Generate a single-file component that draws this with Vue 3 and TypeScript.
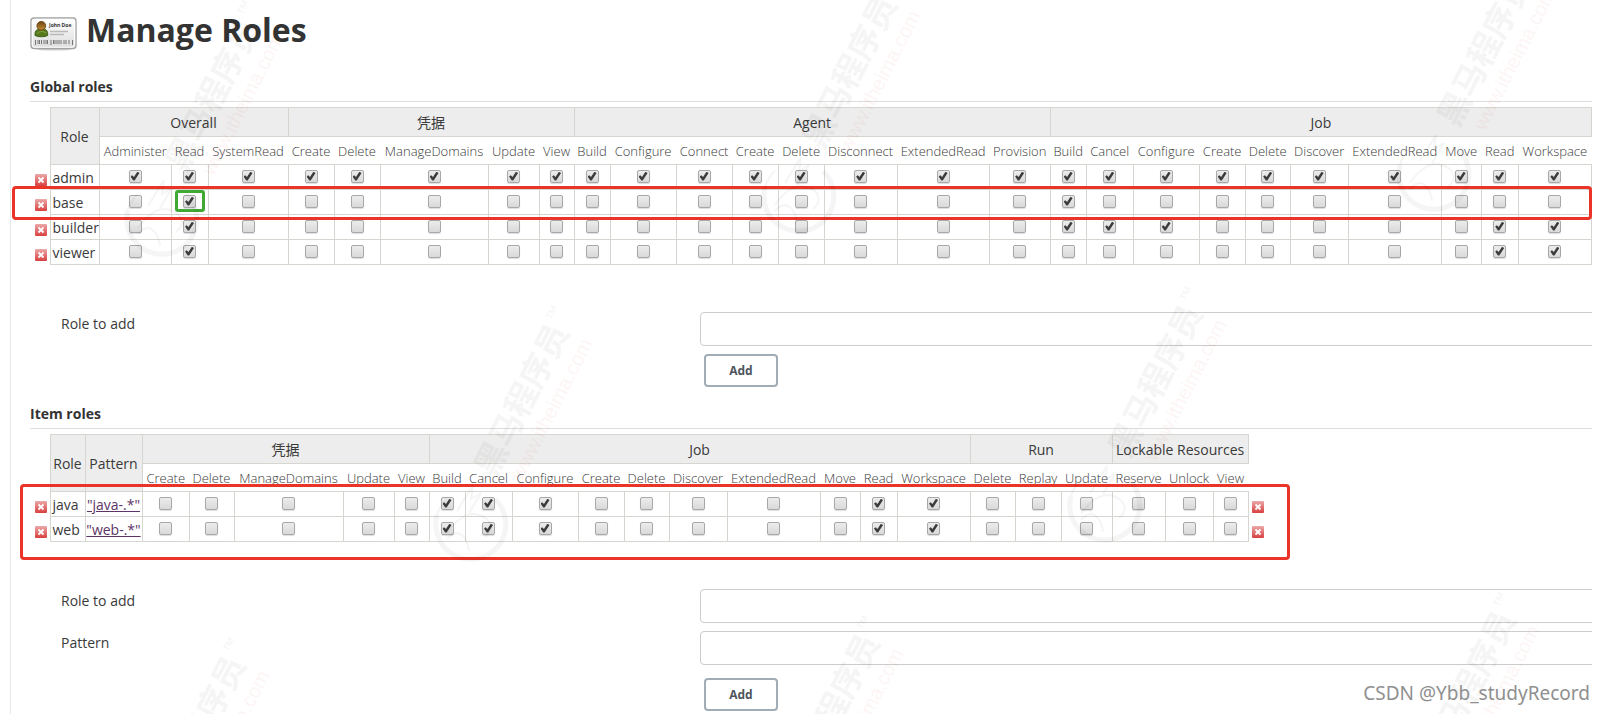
<script setup lang="ts">
import { reactive, ref } from 'vue'

interface Perm { name: string; width: number }
interface Group { title: string; perms: Perm[] }
interface Role { name: string; pattern?: string; granted: boolean[] }

const group = (title: string, perms: [string, number][]): Group => ({
  title,
  perms: perms.map(([name, width]) => ({ name, width })),
})

const jobPerms: [string, number][] = [
  ['Build', 36], ['Cancel', 47], ['Configure', 66], ['Create', 46], ['Delete', 45],
  ['Discover', 58], ['ExtendedRead', 93], ['Move', 40], ['Read', 37], ['Workspace', 73],
]

const globalGroups: Group[] = [
  group('Overall', [['Administer', 72], ['Read', 37], ['SystemRead', 80]]),
  group('凭据', [['Create', 46], ['Delete', 46], ['ManageDomains', 108], ['Update', 51], ['View', 35]]),
  group('Agent', [
    ['Build', 36], ['Configure', 66], ['Connect', 56], ['Create', 46], ['Delete', 46],
    ['Disconnect', 73], ['ExtendedRead', 92], ['Provision', 61],
  ]),
  group('Job', jobPerms),
]

const itemGroups: Group[] = [
  group('凭据', [['Create', 47], ['Delete', 45], ['ManageDomains', 109], ['Update', 51], ['View', 35]]),
  group('Job', jobPerms),
  group('Run', [['Delete', 45], ['Replay', 46], ['Update', 51]]),
  group('Lockable Resources', [['Reserve', 53], ['Unlock', 48], ['View', 35]]),
]

const flat = (groups: Group[]) =>
  groups.flatMap((g) => g.perms.map((p) => ({ ...p, key: `${g.title}/${p.name}` })))
const globalPerms = flat(globalGroups)
const itemPerms = flat(itemGroups)

const grant = (perms: { key: string }[], keys: string[]) => perms.map((p) => keys.includes(p.key))

const globalRoles = reactive<Role[]>([
  { name: 'admin', granted: globalPerms.map(() => true) },
  { name: 'base', granted: grant(globalPerms, ['Overall/Read', 'Job/Build']) },
  {
    name: 'builder',
    granted: grant(globalPerms, ['Overall/Read', 'Job/Build', 'Job/Cancel', 'Job/Configure', 'Job/Read', 'Job/Workspace']),
  },
  { name: 'viewer', granted: grant(globalPerms, ['Overall/Read', 'Job/Read', 'Job/Workspace']) },
])

const itemKeys = ['Job/Build', 'Job/Cancel', 'Job/Configure', 'Job/Read', 'Job/Workspace']
const itemRoles = reactive<Role[]>([
  { name: 'java', pattern: '"java-.*"', granted: grant(itemPerms, itemKeys) },
  { name: 'web', pattern: '"web-.*"', granted: grant(itemPerms, itemKeys) },
])

const newGlobal = ref('')
const newItem = ref('')
const newPattern = ref('')

function addGlobal() {
  if (!newGlobal.value) return
  globalRoles.push({ name: newGlobal.value, granted: globalPerms.map(() => false) })
  newGlobal.value = ''
}
function addItem() {
  if (!newItem.value) return
  itemRoles.push({ name: newItem.value, pattern: `"${newPattern.value}"`, granted: itemPerms.map(() => false) })
  newItem.value = ''
  newPattern.value = ''
}

const stamps = [
  [162, 220], [799, 197], [1434, 175],
  [471, 525], [1105, 506],
  [148, 857], [782, 835], [1418, 812],
]
</script>

<template>
  <div class="page">
    <main class="panel">
      <header class="head">
        <svg class="badge" viewBox="0 0 48 34" aria-hidden="true">
          <defs>
            <linearGradient id="card" x1="0" y1="0" x2="0" y2="1">
              <stop offset="0" stop-color="#ffffff" />
              <stop offset="1" stop-color="#dcdcdc" />
            </linearGradient>
            <linearGradient id="head" x1="0" y1="0" x2="0" y2="1">
              <stop offset="0" stop-color="#6b4310" />
              <stop offset="1" stop-color="#c58a34" />
            </linearGradient>
          </defs>
          <ellipse cx="24" cy="32" rx="18" ry="1.6" fill="#000" opacity=".18" />
          <rect x="1" y="1" width="45" height="30.5" rx="3" fill="url(#card)" stroke="#a3a3a3" stroke-width="1.4" />
          <rect x="2.3" y="2.3" width="42.4" height="27.9" rx="2" fill="none" stroke="#fff" />
          <path d="M5 18.500c-.4-5 2.300-7 6.500-7s6.600 2 6.200 7c-2.500 1.700-10 1.700-12.700 0z" fill="#56791c" stroke="#33500c" stroke-width=".8" />
          <path d="M7 17c1-2.500 6-3.500 9-1" fill="none" stroke="#86a743" />
          <circle cx="11.300" cy="8.800" r="4.400" fill="url(#head)" stroke="#5f3c0d" stroke-width=".8" />
          <text x="19" y="10" class="badge-name">John Doe</text>
          <path d="M20 14.500h18M20 17.500h14" stroke="#b9b9b9" stroke-width="1.300" />
          <path d="M5.500 23v5M8 23v4M9.500 23v4M11.500 23v4M14 23v4M16 23v4M17.500 23v4M21 23v5M23.500 23v4M25 23v4M27 23v4M29 23v4M31 23v4M34 23v4M36 23v4M39 23v4M42.500 23v5" stroke="#777" stroke-width="1" />
        </svg>
        <h1>Manage Roles</h1>
      </header>

      <h2>Global roles</h2>
      <div class="matrix">
        <table class="wide">
          <colgroup>
            <col class="c-del" /><col class="c-role" />
            <col v-for="p in globalPerms" :key="p.key" :style="{ width: p.width + 'px' }" />
          </colgroup>
          <thead>
            <tr>
              <td class="bare"></td>
              <th rowspan="2" scope="col">Role</th>
              <th v-for="g in globalGroups" :key="g.title" :colspan="g.perms.length" scope="colgroup">{{ g.title }}</th>
            </tr>
            <tr>
              <td class="bare"></td>
              <th v-for="p in globalPerms" :key="p.key" class="perm" scope="col">{{ p.name }}</th>
            </tr>
          </thead>
          <tbody>
            <tr v-for="(r, ri) in globalRoles" :key="r.name">
              <td class="bare">
                <button class="del" type="button" :aria-label="`Delete ${r.name}`" @click="globalRoles.splice(ri, 1)">
                  <svg viewBox="0 0 12 12" aria-hidden="true"><path d="M3.500 3.500l5 5M8.500 3.500l-5 5" stroke="#fff" stroke-width="1.800" /></svg>
                </button>
              </td>
              <td class="name">{{ r.name }}</td>
              <td v-for="(p, i) in globalPerms" :key="p.key" class="tick">
                <span class="tick-box" :class="{ marked: r.name === 'base' && p.key === 'Overall/Read' }">
                  <input v-model="r.granted[i]" type="checkbox" :aria-label="`${r.name} ${p.key}`" />
                </span>
              </td>
            </tr>
          </tbody>
        </table>
        <div class="outline outline-base"></div>
      </div>

      <form class="fields" @submit.prevent="addGlobal">
        <label for="global-role">Role to add</label>
        <input id="global-role" v-model="newGlobal" type="text" />
        <button class="add" type="submit">Add</button>
      </form>

      <h2>Item roles</h2>
      <div class="matrix fit">
        <table>
          <colgroup>
            <col class="c-del" /><col class="c-short" /><col class="c-pattern" />
            <col v-for="p in itemPerms" :key="p.key" :style="{ width: p.width + 'px' }" />
            <col class="c-del" />
          </colgroup>
          <thead>
            <tr>
              <td class="bare"></td>
              <th rowspan="2" scope="col">Role</th>
              <th rowspan="2" scope="col">Pattern</th>
              <th v-for="g in itemGroups" :key="g.title" :colspan="g.perms.length" scope="colgroup">{{ g.title }}</th>
              <td class="bare"></td>
            </tr>
            <tr>
              <td class="bare"></td>
              <th v-for="p in itemPerms" :key="p.key" class="perm" scope="col">{{ p.name }}</th>
              <td class="bare"></td>
            </tr>
          </thead>
          <tbody>
            <tr v-for="(r, ri) in itemRoles" :key="r.name">
              <td class="bare">
                <button class="del" type="button" :aria-label="`Delete ${r.name}`" @click="itemRoles.splice(ri, 1)">
                  <svg viewBox="0 0 12 12" aria-hidden="true"><path d="M3.500 3.500l5 5M8.500 3.500l-5 5" stroke="#fff" stroke-width="1.800" /></svg>
                </button>
              </td>
              <td class="name">{{ r.name }}</td>
              <td class="pattern"><a href="#">{{ r.pattern }}</a></td>
              <td v-for="(p, i) in itemPerms" :key="p.key" class="tick">
                <span class="tick-box">
                  <input v-model="r.granted[i]" type="checkbox" :aria-label="`${r.name} ${p.key}`" />
                </span>
              </td>
              <td class="bare trailing">
                <button class="del" type="button" :aria-label="`Delete ${r.name}`" @click="itemRoles.splice(ri, 1)">
                  <svg viewBox="0 0 12 12" aria-hidden="true"><path d="M3.500 3.500l5 5M8.500 3.500l-5 5" stroke="#fff" stroke-width="1.800" /></svg>
                </button>
              </td>
            </tr>
          </tbody>
        </table>
        <div class="outline outline-items"></div>
      </div>

      <form class="fields" @submit.prevent="addItem">
        <label for="item-role">Role to add</label>
        <input id="item-role" v-model="newItem" type="text" />
        <label for="item-pattern">Pattern</label>
        <input id="item-pattern" v-model="newPattern" type="text" />
        <button class="add spaced" type="submit">Add</button>
      </form>
    </main>

    <svg class="stamps" aria-hidden="true">
      <g v-for="([x, y], i) in stamps" :key="i" :transform="`translate(${x} ${y})`">
        <g fill="none" stroke="#000">
          <path d="M-34 -10A35 35 0 1 0 24 -26" stroke-width="5" />
          <path d="M-34 -10A35 35 0 0 1 -24 -26" stroke-width="2" />
          <path d="M-14 -14L2 -40L0 -26L10 -32L-2 -12M-24 8C-16 -4 -4 -14 8 -10S24 4 14 12M-24 14C-14 2 -4 10 -2 26" stroke-width="2" />
        </g>
        <g transform="rotate(-63)">
          <text x="52" y="0" class="stamp-name">黑马程序员</text>
          <text x="218" y="-17" class="stamp-tm">™</text>
          <text x="62" y="26" class="stamp-url">www.itheima.com</text>
        </g>
      </g>
    </svg>
    <div class="credit">CSDN @Ybb_studyRecord</div>
  </div>
</template>

<style>
body {
  margin: 0;
  background: #fff;
}
</style>

<style scoped>
* {
  box-sizing: border-box;
}
.page {
  position: relative;
  min-height: 100vh;
  overflow: hidden;
  padding-left: 10px;
  color: #3a3a3a;
  font-family: "Open Sans", "Noto Sans", "Noto Sans CJK SC", sans-serif;
  font-size: 14px;
  line-height: 20px;
}
.panel {
  min-height: 100vh;
  padding: 9px 12px 0 19px;
  border-left: 1px solid #e8e8e8;
}
.head {
  display: flex;
  align-items: center;
  gap: 8px;
  margin-bottom: 26px;
}
.badge {
  width: 48px;
  height: 34px;
  margin-top: 8px;
}
.badge-name {
  font-size: 5px;
  font-weight: 700;
  fill: #333;
}
h1 {
  margin: 0;
  color: #333;
  font-size: 32px;
  line-height: 40px;
}
h2 {
  margin: 0 0 5px;
  padding-bottom: 4px;
  border-bottom: 1px solid #ddd;
  color: #333;
  font-size: 14px;
  line-height: 20px;
}
.matrix {
  position: relative;
}
.fit {
  width: max-content;
}
table {
  width: 1238px;
  table-layout: fixed;
  border-collapse: collapse;
}
table.wide {
  width: 100%;
}
.c-del { width: 20px; }
.c-role { width: 49px; }
.c-short { width: 35px; }
.c-pattern { width: 57px; }
th,
td {
  height: 25px;
  padding: 0;
  border: 1px solid #d6d6d0;
  text-align: center;
  white-space: nowrap;
}
th {
  height: 29px;
  padding-top: 1px;
  background: #ededed;
  font-weight: 400;
}
th.perm {
  height: 28px;
  border-right: 0;
  border-left: 0;
  background: #fff;
  font-size: 13px;
  font-weight: 300;
}
td.bare {
  border: 0;
  vertical-align: bottom;
}
td.name {
  padding: 2px 0 0 2px;
  line-height: 18px;
  text-align: left;
}
td.pattern {
  padding-top: 2px;
  line-height: 18px;
}
.pattern a {
  color: #5c3566;
}
.tick {
  vertical-align: top;
}
.tick-box {
  display: flex;
  align-items: center;
  justify-content: center;
  width: 30px;
  height: 22px;
  margin: 0 auto;
}
.marked {
  border: 3px solid #3fa933;
  border-radius: 3px;
}
.tick input {
  position: relative;
  flex: none;
  width: 13px;
  height: 13px;
  margin: 0;
  appearance: none;
  border: 1px solid #a8a8a8;
  border-radius: 2px;
  background: linear-gradient(#ececec, #d9d9d9);
  box-shadow: 0 1px 1px #ddd;
}
.tick input:checked::after {
  content: "";
  position: absolute;
  inset: 1px;
  background: #3c3c3c;
  clip-path: polygon(0 55%, 18% 42%, 38% 62%, 76% 4%, 100% 16%, 46% 100%, 30% 100%);
}
.del {
  display: block;
  width: 12px;
  height: 12px;
  margin: 0 0 4px 5px;
  padding: 0;
  border: 0;
  border-radius: 1px;
  background: linear-gradient(#eba9a9, #d8403f);
}
.del svg {
  display: block;
}
.trailing .del {
  margin-left: 3px;
}
.outline {
  position: absolute;
  border: 3px solid #e93427;
  border-radius: 4px;
  pointer-events: none;
}
.outline-base {
  top: 79px;
  right: 0;
  left: -18px;
  height: 34px;
}
.outline-items {
  top: 50px;
  right: -22px;
  left: -10px;
  height: 76px;
}
.fields {
  display: grid;
  grid-template-columns: 5fr 7fr;
  row-gap: 8px;
  margin: 47px 0 17px;
  padding-left: 31px;
  overflow: hidden;
}
.fields:last-child {
  margin-bottom: 0;
}
.fields label {
  padding-top: 2px;
}
.fields input {
  height: 34px;
  margin-right: -4px;
  margin-left: 1px;
  padding: 4px 8px;
  border: 1px solid #ccc;
  border-radius: 4px;
  background: transparent;
  font: inherit;
}
.add {
  grid-column: 2;
  justify-self: start;
  width: 74px;
  height: 33px;
  margin-left: 5px;
  border: 2px solid #a0acb6;
  border-radius: 4px;
  background: #fff;
  color: #4d545d;
  font: 700 12px/20px "Open Sans", "Noto Sans", sans-serif;
}
.spaced {
  margin-top: 5px;
}
.stamps {
  position: absolute;
  inset: 0;
  width: 100%;
  height: 100%;
  opacity: 0.035;
  pointer-events: none;
}
.stamp-name {
  font: 700 33px "Noto Sans CJK SC", sans-serif;
}
.stamp-tm {
  font: 400 16px "Liberation Sans", sans-serif;
}
.stamp-url {
  fill: #d00000;
  font: 400 20px "Liberation Sans", sans-serif;
}
.credit {
  position: absolute;
  right: 14px;
  bottom: 8px;
  color: #8f8f8f;
  font: 400 19px/26px "Noto Sans", sans-serif;
  text-shadow: 0 0 2px #fff;
}
</style>
